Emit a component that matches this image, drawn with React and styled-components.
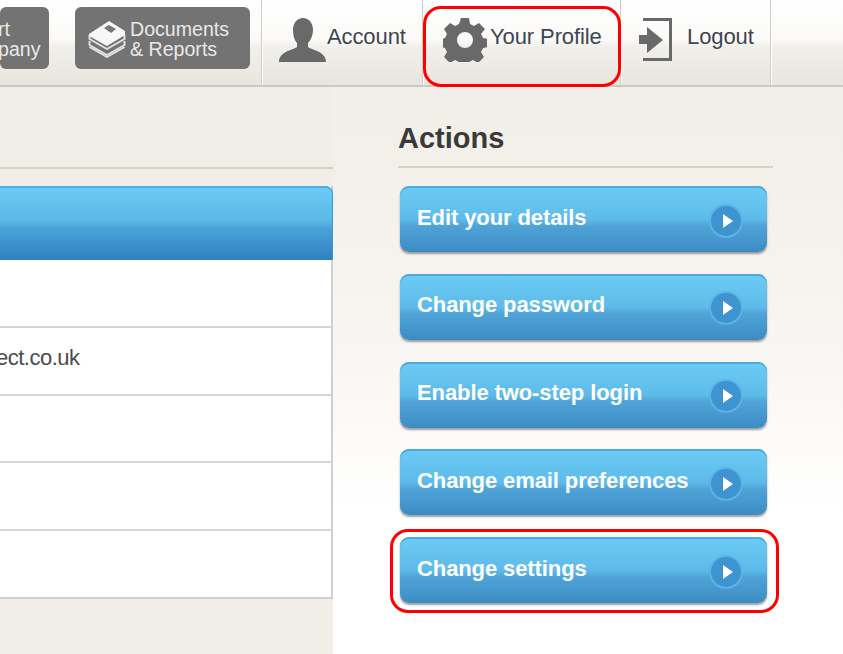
import styled, { createGlobalStyle } from "styled-components";

const GlobalStyle = createGlobalStyle`
  html, body {
    margin: 0;
    padding: 0;
    width: 843px;
    height: 654px;
    overflow: hidden;
    font-family: "Liberation Sans", Arial, sans-serif;
  }
`;

const Page = styled.div`
  width: 843px;
  height: 654px;
  overflow: hidden;
  display: flex;
  flex-direction: column;
  background: linear-gradient(180deg, #f2efe8 0, #f3f0ea 160px, #f8f6f2 350px, #fff 510px);
`;

const TopBar = styled.header`
  height: 85px;
  flex: none;
  display: flex;
  align-items: stretch;
  border-bottom: 2px solid #c9c8c3;
  background: linear-gradient(180deg, #fff 0, #fbfaf8 40px, #f2f0eb 46px, #e8e5de 85px);
`;

const GreyButton = styled.a`
  flex: none;
  box-sizing: border-box;
  height: 62px;
  margin-top: 7px;
  display: flex;
  align-items: center;
  gap: 4px;
  border-radius: 6px;
  background: #737373;
  color: #e9e9e9;
  font-size: 19.6px;
  line-height: 20px;
  padding-top: 2px;
  width: ${({ $width }) => $width}px;
  margin-left: ${({ $left }) => $left}px;
  padding-left: ${({ $pad }) => $pad}px;
`;

const CutLabel = styled.span`
  display: block;
  margin-left: -2px;
`;

const NavGroup = styled.nav`
  display: flex;
  align-items: stretch;
  margin-left: 11px;
  border-left: 1px solid #cfcec9;
  box-shadow: inset 1px 0 0 #fff;
`;

const NavItem = styled.a`
  box-sizing: border-box;
  width: ${({ $width }) => $width}px;
  padding-left: ${({ $pad }) => $pad}px;
  display: flex;
  align-items: flex-start;
  border-right: 1px solid #cfcec9;
  box-shadow: 1px 0 0 #fff;
  color: #3d4650;
  font-size: 22px;
  letter-spacing: -0.1px;
`;

const NavIcon = styled.svg`
  flex: none;
  margin-top: 18px;
  fill: #696969;
`;

const NavLabel = styled.span`
  margin-top: 22px;
  line-height: 29px;
  margin-left: ${({ $gap }) => $gap}px;
`;

const Main = styled.main`
  flex: 1;
  display: flex;
  align-items: flex-start;
`;

const LeftColumn = styled.section`
  width: 333px;
  flex: none;
  align-self: stretch;
  display: flex;
  flex-direction: column;
  background: #f1eee7;
  padding-top: 80px;
`;

const HeadingRule = styled.div`
  height: 2px;
  background: #d6d2ca;
`;

const DetailsTable = styled.div`
  margin-top: 17px;
  border-right: 2px solid #cfcfcf;
  border-bottom: 2px solid #cfcfcf;
  background: #fff;
`;

const TableHead = styled.div`
  height: 74px;
  margin-right: -2px;
  border-top-right-radius: 8px;
  box-shadow: inset 0 2px 0 #4eaee4, inset -1px 0 0 #3f93cf;
  background: linear-gradient(180deg, #6ccbf7 0, #5cb8e6 35px, #4ba2d8 42px, #2f82c2 74px);
`;

const TableRow = styled.div`
  box-sizing: border-box;
  height: ${({ $height }) => $height}px;
  display: flex;
  align-items: center;
  color: #4b4b4b;
  font-size: 22px;
  letter-spacing: -0.5px;
  border-top: ${({ $first }) => ($first ? "none" : "2px solid #d5d5d5")};
  padding-bottom: 6px;
`;

const CutText = styled.span`
  margin-left: -4px;
`;

const RightColumn = styled.aside`
  width: 375px;
  margin-left: 65px;
  padding-top: 33px;
  display: flex;
  flex-direction: column;
`;

const Title = styled.h2`
  margin: 0;
  height: 46px;
  line-height: 36px;
  font-size: 29px;
  font-weight: 700;
  color: #3a3a3a;
  border-bottom: 2px solid #d6d2ca;
`;

const ActionList = styled.div`
  display: flex;
  flex-direction: column;
  gap: 21.8px;
  margin-top: 18px;
  padding-left: 2px;
`;

const ActionButton = styled.a`
  box-sizing: border-box;
  width: 367px;
  height: 66px;
  display: flex;
  align-items: center;
  justify-content: space-between;
  padding: 0 26px 3px 17px;
  border-radius: 9px;
  color: #fff;
  font-size: 22px;
  font-weight: 700;
  letter-spacing: -0.1px;
  box-shadow: inset 0 2px 0 #4ea9dd, 0 2px 2px rgba(80, 80, 80, 0.55);
  background: linear-gradient(180deg, #6ccbf7 0, #5ebbe9 33px, #4fa3d7 40px, #3c8cc3 66px);
`;

const Arrow = styled.span`
  width: 30px;
  height: 30px;
  margin-top: 6px;
  border-radius: 50%;
  flex: none;
  display: flex;
  align-items: center;
  justify-content: center;
  background: #3d94d0;
  box-shadow: 0 0 0 2px #5cb4e4;
  &::after {
    content: "";
    margin-left: 3px;
    border-left: 10px solid #fff;
    border-top: 7px solid transparent;
    border-bottom: 7px solid transparent;
  }
`;

const Highlighted = styled.div`
  position: relative;
  width: 367px;
  &::after {
    content: "";
    position: absolute;
    inset: -8px -12px -10px -10px;
    border: 3px solid #f00;
    border-radius: 18px;
    pointer-events: none;
  }
`;

const ProfileWrap = styled.div`
  position: relative;
  display: flex;
  &::after {
    content: "";
    position: absolute;
    left: 0;
    top: 6px;
    width: 198px;
    height: 81px;
    box-sizing: border-box;
    border: 3px solid #f00;
    border-radius: 18px;
    pointer-events: none;
  }
`;

const actions = ["Edit your details", "Change password", "Enable two-step login", "Change email preferences"];

const StackIcon = () => (
  <svg width="38" height="38" viewBox="0 0 38 38" style={{ flex: "none" }}>
    <g fill="none" stroke="#e2e2e2" strokeWidth="2" strokeLinejoin="round">
      <path d="M1.500 15v4L19 29l17.500-10v-4" />
      <path d="M1.500 21v4L19 35l17.500-10v-4" />
      <path d="M1.500 27L19 37l17.500-10" />
    </g>
    <path d="M1 14L21 1l16 10v4L19 26 1 16z" fill="#f7f7f7" />
    <path d="M16 8l5-3 7 4-5 4z" fill="#777" />
  </svg>
);

export default function App() {
  return (
    <Page>
      <GlobalStyle />
      <TopBar>
        <GreyButton $width={49} $left={0} $pad={0}>
          <CutLabel>
            rt
            <br />
            pany
          </CutLabel>
        </GreyButton>
        <GreyButton $width={175} $left={26} $pad={13}>
          <StackIcon />
          <span>
            Documents
            <br />
            &amp; Reports
          </span>
        </GreyButton>
        <NavGroup>
          <NavItem $width={161} $pad={17}>
            <NavIcon width="47" height="44" viewBox="0 0 47 44">
              <path d="M24 0c6 0 10 5 10 12 0 5-2 10-5 13v4c3 3 18 4 18 15H0c0-11 15-12 18-15v-4c-3-3-4-8-4-13C14 5 18 0 24 0z" />
            </NavIcon>
            <NavLabel $gap={1}>Account</NavLabel>
          </NavItem>
          <ProfileWrap>
            <NavItem $width={198} $pad={20}>
              <NavIcon width="44" height="44" viewBox="0 0 44 44">
                <path
                  fillRule="evenodd"
                  d="M18 0h8l1 6 4 2 5-3 6 6-4 5 2 4 5 1v8l-5 1-2 4 3 5-6 6-5-3-4 2-1 5h-8l-1-5-4-2-5 3-6-6 3-5-2-4-5-1v-8l5-1 2-4-3-5 6-6 5 3 4-2zM22 14a8 8 0 100 16 8 8 0 000-16z"
                />
              </NavIcon>
              <NavLabel $gap={3}>Your Profile</NavLabel>
            </NavItem>
          </ProfileWrap>
          <NavItem $width={150} $pad={18}>
            <NavIcon width="33" height="44" viewBox="0 0 33 44">
              <path d="M4 0h29v43H4v-3h26V3H4z" />
              <path d="M0 17h8V9l16 13-16 13v-9H0z" />
            </NavIcon>
            <NavLabel $gap={15}>Logout</NavLabel>
          </NavItem>
        </NavGroup>
      </TopBar>
      <Main>
        <LeftColumn>
          <HeadingRule />
          <DetailsTable>
            <TableHead />
            <TableRow $first $height={66} />
            <TableRow $height={68}>
              <CutText>ect.co.uk</CutText>
            </TableRow>
            <TableRow $height={67} />
            <TableRow $height={68} />
            <TableRow $height={68} />
          </DetailsTable>
        </LeftColumn>
        <RightColumn>
          <Title>Actions</Title>
          <ActionList>
            {actions.map((label) => (
              <ActionButton key={label}>
                {label}
                <Arrow />
              </ActionButton>
            ))}
            <Highlighted>
              <ActionButton>
                Change settings
                <Arrow />
              </ActionButton>
            </Highlighted>
          </ActionList>
        </RightColumn>
      </Main>
    </Page>
  );
}
